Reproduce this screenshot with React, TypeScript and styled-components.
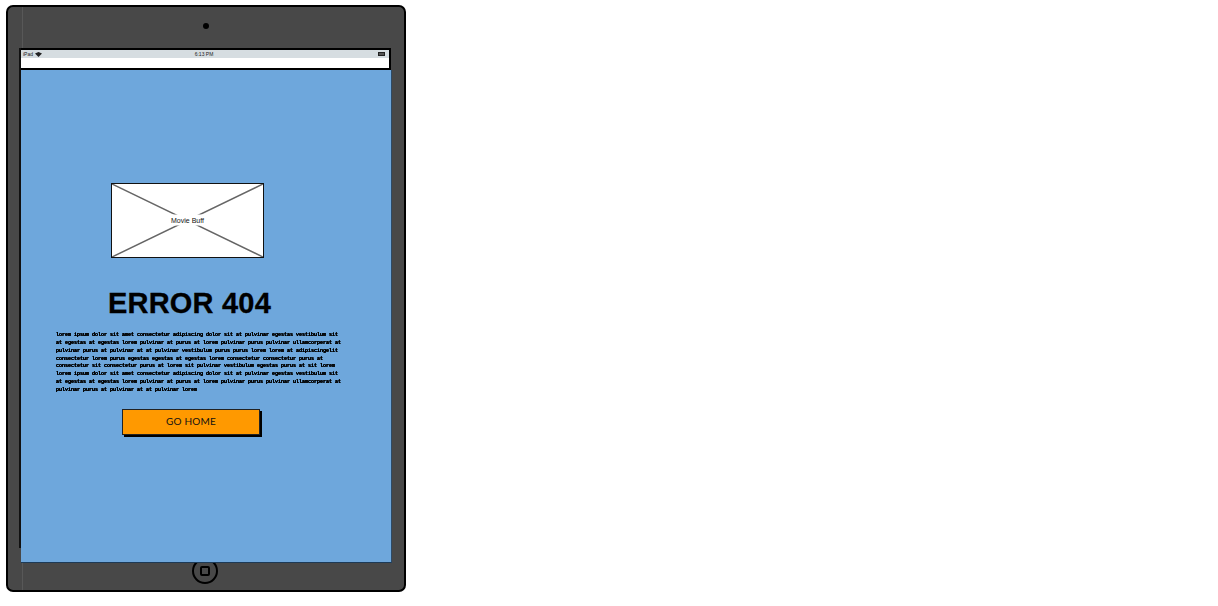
import React from "react";
import styled, { createGlobalStyle } from "styled-components";

const GlobalStyle = createGlobalStyle`
  html, body {
    margin: 0;
    padding: 0;
    background: #fff;
  }
`;

const Page = styled.div`
  padding: 5px 6px;
`;

const Device = styled.div`
  position: relative;
  box-sizing: border-box;
  width: 400px;
  height: 587px;
  background: #484848;
  border: 2px solid #000;
  border-radius: 7px;
  display: flex;
  flex-direction: column;
  overflow: hidden;

  &::before {
    content: "";
    position: absolute;
    left: 14px;
    top: 0;
    bottom: 0;
    width: 1px;
    background: #585858;
  }
`;

const Camera = styled.div`
  width: 6px;
  height: 6px;
  border-radius: 50%;
  background: #000;
  margin: 16px 0 19px 195px;
  flex: none;
`;

const Screen = styled.div`
  position: relative;
  z-index: 1;
  width: 373px;
  margin-left: 11px;
  flex: none;
  display: flex;
  flex-direction: column;

  &::before {
    content: "";
    position: absolute;
    left: 0;
    top: 0;
    width: 2px;
    height: 500px;
    background: #111;
  }
`;

const TopBar = styled.div`
  box-sizing: border-box;
  width: 372px;
  height: 22px;
  border: 2px solid #000;
  background: #fff;
`;

const StatusBar = styled.div`
  height: 8px;
  background: #d6dde1;
  display: grid;
  grid-template-columns: 1fr auto 1fr;
  align-items: center;
  padding: 0 4px 0 2px;
  font-family: "Liberation Sans", Arial, sans-serif;
  font-size: 5px;
  line-height: 8px;
  color: #222;
`;

const Carrier = styled.div`
  display: flex;
  align-items: center;
  gap: 2px;
`;

const Battery = styled.div`
  justify-self: end;
  box-sizing: border-box;
  width: 7px;
  height: 4px;
  border: 1px solid #222;
  background: #555;
`;

const Content = styled.div`
  box-sizing: border-box;
  width: 371px;
  height: 493px;
  margin-left: 2px;
  background: #6ea7dc;
  border-right: 1px solid #2d4a66;
  border-bottom: 1px solid #1d3a56;
  padding-top: 113px;
  display: flex;
  flex-direction: column;
`;

const Placeholder = styled.div`
  position: relative;
  box-sizing: border-box;
  width: 153px;
  height: 75px;
  margin-left: 90px;
  background: #fff;
  border: 1px solid #111;
`;

const Cross = styled.svg`
  display: block;
  width: 100%;
  height: 100%;
`;

const PlaceholderLabel = styled.span`
  position: absolute;
  left: 50%;
  top: 36px;
  transform: translate(-50%, -50%);
  background: #fff;
  border-radius: 2px;
  padding: 1px 3px;
  font-family: "Liberation Sans", Arial, sans-serif;
  font-size: 7px;
  line-height: 9px;
  color: #111;
  white-space: nowrap;
`;

const Title = styled.h1`
  margin: 27px 0 0;
  width: 337px;
  text-align: center;
  font-family: "Liberation Sans", Arial, sans-serif;
  font-size: 29px;
  line-height: 36px;
  font-weight: 700;
  letter-spacing: 0.2px;
  -webkit-text-stroke: 0.3px #000;
  color: #000;
`;

const Greeked = styled.div`
  margin: 11px 0 0 35px;
  font-family: "Liberation Mono", monospace;
  font-size: 5px;
  line-height: 7.85px;
  font-weight: 700;
  color: #000;
  white-space: nowrap;
  text-shadow: 0 0 0.6px #000, 0 0 0.6px #000;
  filter: blur(0.35px);
`;

const GreekedLine = styled.div`
  height: 7.85px;
`;

const HomeAction = styled.button`
  box-sizing: border-box;
  width: 138px;
  height: 26px;
  margin: 14px 0 0 101px;
  padding: 0 0 2px;
  background: #ff9900;
  border: 1px solid #222;
  box-shadow: 2px 2px 0 #000;
  font-family: Lato, "Liberation Sans", sans-serif;
  font-size: 10px;
  letter-spacing: 0.2px;
  color: #111;
  flex: none;
`;

const HomeButton = styled.div`
  box-sizing: border-box;
  flex: none;
  width: 26px;
  height: 26px;
  margin: -5px 0 0 184px;
  border: 2.5px solid #000;
  border-radius: 50%;
  display: flex;
  align-items: center;
  justify-content: center;
`;

const HomeSquare = styled.div`
  box-sizing: border-box;
  width: 10px;
  height: 10px;
  border: 2px solid #000;
  border-radius: 2px;
`;

const lines = [
  "lorem ipsum dolor sit amet consectetur adipiscing dolor sit at pulvinar egestas vestibulum sit",
  "at egestas at egestas lorem pulvinar at purus at lorem pulvinar purus pulvinar ullamcorperat at",
  "pulvinar purus at pulvinar at at pulvinar vestibulum purus purus lorem lorem at adipiscingelit",
  "consectetur lorem purus egestas egestas at egestas lorem consectetur consectetur purus at",
  "consectetur sit consectetur purus at lorem sit pulvinar vestibulum egestas purus at sit lorem",
  "lorem ipsum dolor sit amet consectetur adipiscing dolor sit at pulvinar egestas vestibulum sit",
  "at egestas at egestas lorem pulvinar at purus at lorem pulvinar purus pulvinar ullamcorperat at",
  "pulvinar purus at pulvinar at at pulvinar lorem",
];

export default function App() {
  return (
    <Page>
      <GlobalStyle />
      <Device>
        <Camera />
        <Screen>
          <TopBar>
            <StatusBar>
              <Carrier>
                iPad
                <svg width="7" height="5" viewBox="0 0 7 5">
                  <path d="M0 1.5 3.5 0 7 1.5 3.5 5Z" fill="#222" />
                </svg>
              </Carrier>
              <span>6:13 PM</span>
              <Battery />
            </StatusBar>
          </TopBar>
          <Content>
            <Placeholder>
              <Cross viewBox="0 0 151 73" preserveAspectRatio="none">
                <path d="M0 0 151 73M151 0 0 73" stroke="#666" strokeWidth="1.5" fill="none" />
              </Cross>
              <PlaceholderLabel>Movie Buff</PlaceholderLabel>
            </Placeholder>
            <Title>ERROR 404</Title>
            <Greeked>
              {lines.map((line, i) => (
                <GreekedLine key={i}>{line}</GreekedLine>
              ))}
            </Greeked>
            <HomeAction>GO HOME</HomeAction>
          </Content>
        </Screen>
        <HomeButton>
          <HomeSquare />
        </HomeButton>
      </Device>
    </Page>
  );
}
